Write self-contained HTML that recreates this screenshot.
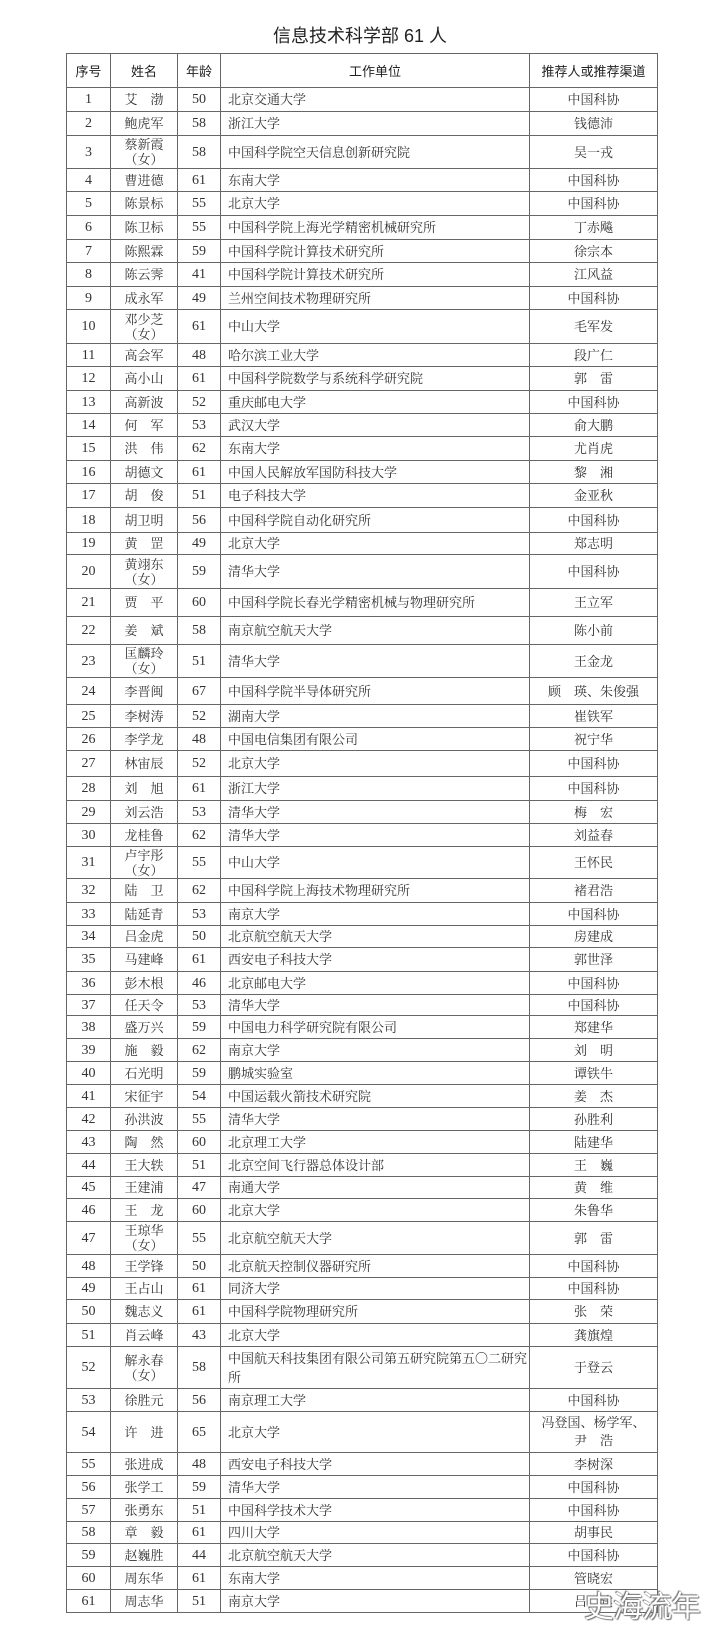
<!DOCTYPE html>
<html><head><meta charset="utf-8"><style>
body{margin:0;width:720px;height:1635px;background:#fff;position:relative;overflow:hidden;font-family:"Liberation Serif","Noto Serif CJK SC",serif;color:#333}
h1{position:absolute;top:22px;left:0;width:720px;text-align:center;margin:0;font:400 18px "Liberation Sans","Noto Sans CJK SC",sans-serif;color:#222}
table{position:absolute;left:66px;top:53px;width:591px;border-collapse:collapse;table-layout:fixed;font-size:13px}
td,th{border:1px solid #666;padding:0;text-align:center;line-height:15px}
th{font:400 13px "Liberation Sans","Noto Sans CJK SC",sans-serif;color:#222}
td:nth-child(4){text-align:left;padding-left:7px}
td:nth-child(1),td:nth-child(3){font-size:14px}
.wm{position:absolute;left:584px;top:1582px;font:400 30px "Noto Sans CJK SC",sans-serif;color:#fff;text-shadow:0 0 1px #555,1px 1px 1px #777,-1px -1px 1px #777;letter-spacing:-1px}
</style></head><body>
<h1>信息技术科学部 61 人</h1>
<table>
<colgroup><col style="width:44px"><col style="width:67px"><col style="width:43px"><col style="width:309px"><col style="width:128px"></colgroup>
<tr style="height:34px"><th>序号</th><th>姓名</th><th>年龄</th><th>工作单位</th><th>推荐人或推荐渠道</th></tr>
<tr style="height:24px"><td>1</td><td>艾　渤</td><td>50</td><td>北京交通大学</td><td>中国科协</td></tr>
<tr style="height:24px"><td>2</td><td>鲍虎军</td><td>58</td><td>浙江大学</td><td>钱德沛</td></tr>
<tr style="height:33px"><td>3</td><td>蔡新霞<br>（女）</td><td>58</td><td>中国科学院空天信息创新研究院</td><td>吴一戎</td></tr>
<tr style="height:23px"><td>4</td><td>曹进德</td><td>61</td><td>东南大学</td><td>中国科协</td></tr>
<tr style="height:24px"><td>5</td><td>陈景标</td><td>55</td><td>北京大学</td><td>中国科协</td></tr>
<tr style="height:24px"><td>6</td><td>陈卫标</td><td>55</td><td>中国科学院上海光学精密机械研究所</td><td>丁赤飚</td></tr>
<tr style="height:23px"><td>7</td><td>陈熙霖</td><td>59</td><td>中国科学院计算技术研究所</td><td>徐宗本</td></tr>
<tr style="height:24px"><td>8</td><td>陈云霁</td><td>41</td><td>中国科学院计算技术研究所</td><td>江风益</td></tr>
<tr style="height:23px"><td>9</td><td>成永军</td><td>49</td><td>兰州空间技术物理研究所</td><td>中国科协</td></tr>
<tr style="height:34px"><td>10</td><td>邓少芝<br>（女）</td><td>61</td><td>中山大学</td><td>毛军发</td></tr>
<tr style="height:23px"><td>11</td><td>高会军</td><td>48</td><td>哈尔滨工业大学</td><td>段广仁</td></tr>
<tr style="height:24px"><td>12</td><td>高小山</td><td>61</td><td>中国科学院数学与系统科学研究院</td><td>郭　雷</td></tr>
<tr style="height:23px"><td>13</td><td>高新波</td><td>52</td><td>重庆邮电大学</td><td>中国科协</td></tr>
<tr style="height:23px"><td>14</td><td>何　军</td><td>53</td><td>武汉大学</td><td>俞大鹏</td></tr>
<tr style="height:24px"><td>15</td><td>洪　伟</td><td>62</td><td>东南大学</td><td>尤肖虎</td></tr>
<tr style="height:23px"><td>16</td><td>胡德文</td><td>61</td><td>中国人民解放军国防科技大学</td><td>黎　湘</td></tr>
<tr style="height:24px"><td>17</td><td>胡　俊</td><td>51</td><td>电子科技大学</td><td>金亚秋</td></tr>
<tr style="height:25px"><td>18</td><td>胡卫明</td><td>56</td><td>中国科学院自动化研究所</td><td>中国科协</td></tr>
<tr style="height:22px"><td>19</td><td>黄　罡</td><td>49</td><td>北京大学</td><td>郑志明</td></tr>
<tr style="height:34px"><td>20</td><td>黄翊东<br>（女）</td><td>59</td><td>清华大学</td><td>中国科协</td></tr>
<tr style="height:28px"><td>21</td><td>贾　平</td><td>60</td><td>中国科学院长春光学精密机械与物理研究所</td><td>王立军</td></tr>
<tr style="height:28px"><td>22</td><td>姜　斌</td><td>58</td><td>南京航空航天大学</td><td>陈小前</td></tr>
<tr style="height:33px"><td>23</td><td>匡麟玲<br>（女）</td><td>51</td><td>清华大学</td><td>王金龙</td></tr>
<tr style="height:27px"><td>24</td><td>李晋闽</td><td>67</td><td>中国科学院半导体研究所</td><td>顾　瑛、朱俊强</td></tr>
<tr style="height:23px"><td>25</td><td>李树涛</td><td>52</td><td>湖南大学</td><td>崔铁军</td></tr>
<tr style="height:23px"><td>26</td><td>李学龙</td><td>48</td><td>中国电信集团有限公司</td><td>祝宁华</td></tr>
<tr style="height:26px"><td>27</td><td>林宙辰</td><td>52</td><td>北京大学</td><td>中国科协</td></tr>
<tr style="height:24px"><td>28</td><td>刘　旭</td><td>61</td><td>浙江大学</td><td>中国科协</td></tr>
<tr style="height:23px"><td>29</td><td>刘云浩</td><td>53</td><td>清华大学</td><td>梅　宏</td></tr>
<tr style="height:23px"><td>30</td><td>龙桂鲁</td><td>62</td><td>清华大学</td><td>刘益春</td></tr>
<tr style="height:32px"><td>31</td><td>卢宇彤<br>（女）</td><td>55</td><td>中山大学</td><td>王怀民</td></tr>
<tr style="height:24px"><td>32</td><td>陆　卫</td><td>62</td><td>中国科学院上海技术物理研究所</td><td>褚君浩</td></tr>
<tr style="height:23px"><td>33</td><td>陆延青</td><td>53</td><td>南京大学</td><td>中国科协</td></tr>
<tr style="height:22px"><td>34</td><td>吕金虎</td><td>50</td><td>北京航空航天大学</td><td>房建成</td></tr>
<tr style="height:24px"><td>35</td><td>马建峰</td><td>61</td><td>西安电子科技大学</td><td>郭世泽</td></tr>
<tr style="height:23px"><td>36</td><td>彭木根</td><td>46</td><td>北京邮电大学</td><td>中国科协</td></tr>
<tr style="height:21px"><td>37</td><td>任天令</td><td>53</td><td>清华大学</td><td>中国科协</td></tr>
<tr style="height:23px"><td>38</td><td>盛万兴</td><td>59</td><td>中国电力科学研究院有限公司</td><td>郑建华</td></tr>
<tr style="height:23px"><td>39</td><td>施　毅</td><td>62</td><td>南京大学</td><td>刘　明</td></tr>
<tr style="height:23px"><td>40</td><td>石光明</td><td>59</td><td>鹏城实验室</td><td>谭铁牛</td></tr>
<tr style="height:23px"><td>41</td><td>宋征宇</td><td>54</td><td>中国运载火箭技术研究院</td><td>姜　杰</td></tr>
<tr style="height:23px"><td>42</td><td>孙洪波</td><td>55</td><td>清华大学</td><td>孙胜利</td></tr>
<tr style="height:23px"><td>43</td><td>陶　然</td><td>60</td><td>北京理工大学</td><td>陆建华</td></tr>
<tr style="height:23px"><td>44</td><td>王大轶</td><td>51</td><td>北京空间飞行器总体设计部</td><td>王　巍</td></tr>
<tr style="height:22px"><td>45</td><td>王建浦</td><td>47</td><td>南通大学</td><td>黄　维</td></tr>
<tr style="height:23px"><td>46</td><td>王　龙</td><td>60</td><td>北京大学</td><td>朱鲁华</td></tr>
<tr style="height:33px"><td>47</td><td>王琼华<br>（女）</td><td>55</td><td>北京航空航天大学</td><td>郭　雷</td></tr>
<tr style="height:23px"><td>48</td><td>王学锋</td><td>50</td><td>北京航天控制仪器研究所</td><td>中国科协</td></tr>
<tr style="height:22px"><td>49</td><td>王占山</td><td>61</td><td>同济大学</td><td>中国科协</td></tr>
<tr style="height:24px"><td>50</td><td>魏志义</td><td>61</td><td>中国科学院物理研究所</td><td>张　荣</td></tr>
<tr style="height:23px"><td>51</td><td>肖云峰</td><td>43</td><td>北京大学</td><td>龚旗煌</td></tr>
<tr style="height:42px"><td>52</td><td>解永春<br>（女）</td><td>58</td><td style="line-height:19px">中国航天科技集团有限公司第五研究院第五〇二研究<br>所</td><td>于登云</td></tr>
<tr style="height:23px"><td>53</td><td>徐胜元</td><td>56</td><td>南京理工大学</td><td>中国科协</td></tr>
<tr style="height:41px"><td>54</td><td>许　进</td><td>65</td><td>北京大学</td><td style="line-height:18px">冯登国、杨学军、<br>尹　浩</td></tr>
<tr style="height:23px"><td>55</td><td>张进成</td><td>48</td><td>西安电子科技大学</td><td>李树深</td></tr>
<tr style="height:23px"><td>56</td><td>张学工</td><td>59</td><td>清华大学</td><td>中国科协</td></tr>
<tr style="height:23px"><td>57</td><td>张勇东</td><td>51</td><td>中国科学技术大学</td><td>中国科协</td></tr>
<tr style="height:22px"><td>58</td><td>章　毅</td><td>61</td><td>四川大学</td><td>胡事民</td></tr>
<tr style="height:23px"><td>59</td><td>赵巍胜</td><td>44</td><td>北京航空航天大学</td><td>中国科协</td></tr>
<tr style="height:23px"><td>60</td><td>周东华</td><td>61</td><td>东南大学</td><td>管晓宏</td></tr>
<tr style="height:23px"><td>61</td><td>周志华</td><td>51</td><td>南京大学</td><td>吕　建</td></tr>
</table>
<div class="wm">史海流年</div>
</body></html>
